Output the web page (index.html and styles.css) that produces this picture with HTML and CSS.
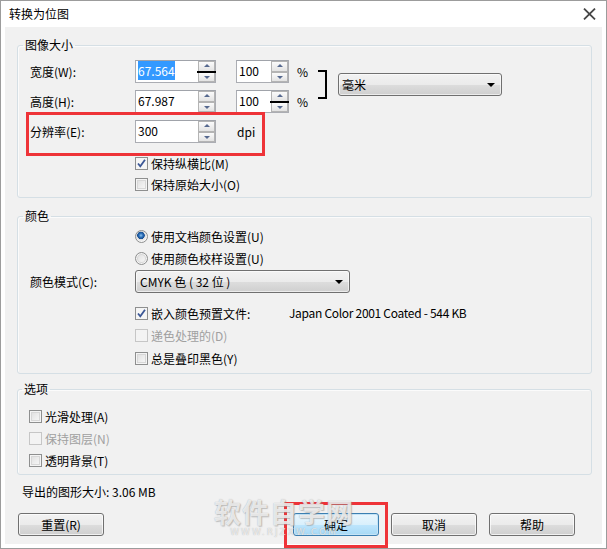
FILE: index.html
```html
<!DOCTYPE html>
<html lang="zh-CN">
<head>
<meta charset="utf-8">
<title>转换为位图</title>
<link rel="stylesheet" href="styles.css">
</head>
<body>
<div class="window">
  <div class="titlebar">
    <span class="title">转换为位图</span>
    <svg class="close" width="13" height="12" viewBox="0 0 13 12"><path d="M1 0.6 L12 11.4 M12 0.6 L1 11.4" stroke="#474747" stroke-width="1.8" fill="none"/></svg>
  </div>
  <div class="content">
    <fieldset class="group g-size">
      <legend>图像大小</legend>
      <div class="size-grid">
        <span class="lbl">宽度(W):</span>
        <div class="spin w81"><span class="val"><span class="sel">67.564</span></span><span class="arrows mark"><i class="up"></i><i class="dn"></i></span></div>
        <div class="spin w53"><span class="val">100</span><span class="arrows"><i class="up"></i><i class="dn"></i></span></div>
        <span class="pct">%</span>
        <span class="bracket"></span>
        <div class="combo unit"><span>毫米</span><i class="caret"></i></div>

        <span class="lbl">高度(H):</span>
        <div class="spin w81"><span class="val">67.987</span><span class="arrows"><i class="up"></i><i class="dn"></i></span></div>
        <div class="spin w53"><span class="val">100</span><span class="arrows mark"><i class="up"></i><i class="dn"></i></span></div>
        <span class="pct">%</span>

        <span class="lbl">分辨率(E):</span>
        <div class="spin w81"><span class="val">300</span><span class="arrows"><i class="up"></i><i class="dn"></i></span></div>
        <span class="dpi">dpi</span>
      </div>
      <div class="checks indent">
        <label class="check"><span class="cb on"><svg width="11" height="11" viewBox="0 0 11 11"><path d="M2 5.5 L4.3 8.3 L9 1.8" stroke="#3b5796" stroke-width="1.8" fill="none"/></svg></span>保持纵横比(M)</label>
        <label class="check"><span class="cb"></span>保持原始大小(O)</label>
      </div>
    </fieldset>

    <fieldset class="group g-color">
      <legend>颜色</legend>
      <div class="indent">
        <label class="check"><span class="rb on"></span>使用文档颜色设置(U)</label>
        <label class="check"><span class="rb"></span>使用颜色校样设置(U)</label>
      </div>
      <div class="mode-row">
        <span class="lbl">颜色模式(C):</span>
        <div class="combo mode"><span>CMYK 色 ( 32 位 )</span><i class="caret"></i></div>
      </div>
      <div class="indent">
        <div class="profile-row">
          <label class="check embed"><span class="cb on"><svg width="11" height="11" viewBox="0 0 11 11"><path d="M2 5.5 L4.3 8.3 L9 1.8" stroke="#3b5796" stroke-width="1.8" fill="none"/></svg></span>嵌入颜色预置文件:</label>
          <span class="profile">Japan Color 2001 Coated - 544 KB</span>
        </div>
        <label class="check disabled"><span class="cb"></span>递色处理的(D)</label>
        <label class="check"><span class="cb"></span>总是叠印黑色(Y)</label>
      </div>
    </fieldset>

    <fieldset class="group g-opt">
      <legend>选项</legend>
      <label class="check"><span class="cb"></span>光滑处理(A)</label>
      <label class="check disabled"><span class="cb"></span>保持图层(N)</label>
      <label class="check"><span class="cb"></span>透明背景(T)</label>
    </fieldset>

    <div class="export">导出的图形大小: 3.06 MB</div>

    <div class="buttons">
      <button class="btn">重置(R)</button>
      <button class="btn default push">确定</button>
      <button class="btn">取消</button>
      <button class="btn">帮助</button>
    </div>

    <span class="mark-box res-box"></span>
    <span class="mark-box ok-box"></span>
    <div class="watermark"><span class="wm-big">软件自学网</span><span class="wm-small">WWW.RJZXW.COM</span></div>
  </div>
</div>
</body>
</html>
```

FILE: styles.css
```css
* { box-sizing: border-box; margin: 0; padding: 0; }
html, body { width: 607px; height: 549px; overflow: hidden; }
body {
  font-family: "Noto Sans CJK SC", "Microsoft YaHei", sans-serif;
  font-size: 12px;
  color: #000;
  background: #fff;
}

.window {
  position: relative;
  width: 607px;
  height: 549px;
  border: 1px solid #9c9c9c;
  background: #fff;
  padding: 0 4px 4px 4px;
  display: flex;
  flex-direction: column;
}

.titlebar {
  height: 26px;
  flex: none;
  display: flex;
  align-items: center;
  justify-content: space-between;
  padding: 0 6px 0 4px;
}
.title { font-size: 12px; line-height: 16px; }
.close { display: block; margin-top: 0; }

.content {
  flex: 1;
  position: relative;
  background: #f1f1f1;
  padding: 10px 10px 0 12px;
  display: flex;
  flex-direction: column;
}

.group {
  border: 1px solid #d5dfe5;
  border-radius: 3px;
  box-shadow: inset 1px 1px 0 #fbfbfb;
  padding: 0 0 0 12px;
  min-width: 0;
}
.group legend {
  font-size: 12px;
  line-height: 16px;
  padding: 0 2px;
  margin-left: -7px;
}

.g-size { padding-bottom: 2px; }
.size-grid {
  margin-top: 7px;
  display: grid;
  grid-template-columns: 105px 101px 53px 29px 20px 164px;
  grid-template-rows: 23px 23px 23px;
  row-gap: 7px;
}
.lbl { line-height: 23px; }

.spin {
  height: 23px;
  display: flex;
  background: #fff;
  border: 1px solid #abadb3;
  border-top-color: #a0a3aa;
}
.w81 { width: 81px; }
.w53 { width: 53px; }
.val {
  flex: 1;
  padding-left: 2px;
  line-height: 20px;
  font-size: 12px;
  white-space: nowrap;
}
.sel { background: #3399ff; color: #fff; padding: 1px 0; }
.arrows {
  position: relative;
  width: 17px;
  display: flex;
  flex-direction: column;
  padding: 0;
}
.arrows i {
  flex: 1;
  position: relative;
  border: 1px solid #b4b4b4;
  background: linear-gradient(#fbfbfb, #e3e3e3);
}
.arrows i::after {
  content: "";
  position: absolute;
  left: 50%;
  top: 50%;
  margin-left: -3px;
  border-left: 3px solid transparent;
  border-right: 3px solid transparent;
}
.arrows .up::after { margin-top: -2px; border-bottom: 3px solid #56698f; }
.arrows .dn::after { margin-top: -1px; border-top: 3px solid #56698f; }
.arrows.mark::before {
  content: "";
  position: absolute;
  left: -1px;
  right: -1px;
  top: 50%;
  height: 2px;
  margin-top: -1px;
  background: #000;
  z-index: 2;
}

.pct { line-height: 23px; padding-left: 8px; }
.dpi { line-height: 23px; padding-left: 1px; }

.bracket {
  grid-row: span 2;
  width: 9px;
  height: 29px;
  margin-top: 10px;
  border: 2px solid #000;
  border-left: none;
}

.combo {
  display: flex;
  align-items: center;
  justify-content: space-between;
  height: 23px;
  border: 1px solid #707070;
  border-radius: 3px;
  background: linear-gradient(#f2f2f2 0%, #ebebeb 50%, #dddddd 51%, #cfcfcf 100%);
  box-shadow: inset 0 0 0 1px rgba(255,255,255,0.6);
  padding: 0 6px 0 3px;
  line-height: 20px;
}
.unit { grid-row: span 2; align-self: start; margin-top: 13px; width: 164px; }
.caret {
  width: 0; height: 0;
  border-left: 4px solid transparent;
  border-right: 4px solid transparent;
  border-top: 4px solid #000;
}

.indent { padding-left: 105px; }
.checks { margin-top: 10px; }
.check {
  display: flex;
  align-items: center;
  height: 21px;
  gap: 3px;
  white-space: nowrap;
}
.cb, .rb {
  flex: none;
  width: 13px;
  height: 13px;
  border: 1px solid #8e8f8f;
  background: linear-gradient(135deg, #dcdcdc, #fbfbfb);
  box-shadow: inset 0 0 0 1px #f4f4f4, inset 0 0 0 2px #d7d7d7;
  display: flex;
  align-items: center;
  justify-content: center;
}
.cb.on { background: #f6f6f6; box-shadow: inset 0 0 0 1px #f4f4f4; }
.rb { border-radius: 50%; }
.rb.on {
  background: radial-gradient(circle at 45% 40%, #8fc3ee 0, #2c6fb8 2px, #174d8f 3.5px, #dcdcdc 4px, #f7f7f7 6px);
  box-shadow: none;
}
.disabled { color: #a0a0a0; }
.disabled .cb { border-color: #c6c6c6; background: #f3f3f3; box-shadow: none; }

.g-color { margin-top: 10px; padding-bottom: 4px; }
.g-color > .indent:first-of-type { margin-top: 1px; }
.g-color .check { height: 22px; }
.mode-row {
  display: flex;
  align-items: center;
  margin-top: 1px;
  margin-bottom: 9px;
}
.mode-row .lbl { width: 105px; }
.mode { width: 215px; padding-left: 4px; }
.profile-row { display: flex; align-items: center; }
.embed { width: 154px; }
.profile { line-height: 22px; letter-spacing: -0.3px; }
.g-color .indent .check.disabled { height: 23px; }

.g-opt { margin-top: 7px; padding-top: 8px; padding-left: 11px; padding-bottom: 3px; }
.g-opt .check { height: 22px; }

.export { margin-top: 9px; padding-left: 5px; line-height: 16px; }

.buttons {
  display: flex;
  gap: 12px;
  margin: 13px 17px 0 1px;
}
.btn {
  width: 86px;
  height: 23px;
  font-family: inherit;
  font-size: 12px;
  color: #000;
  border: 1px solid #707070;
  border-radius: 3px;
  background: linear-gradient(#f2f2f2 0%, #ebebeb 50%, #dddddd 51%, #cfcfcf 100%);
  box-shadow: inset 0 0 0 1px rgba(255,255,255,0.7);
}
.btn.push { margin-left: auto; }
.btn.default {
  border-color: #3c7fb1;
  background: linear-gradient(#eaf6fd 0%, #d9f0fc 50%, #bee6fd 51%, #a7d9f5 100%);
  box-shadow: inset 0 0 0 1px #c5e4f6;
}

.mark-box {
  position: absolute;
  border: 3px solid #ee3338;
  pointer-events: none;
}
.res-box { left: 21px; top: 85px; width: 239px; height: 44px; }
.ok-box { left: 279px; top: 475px; width: 104px; height: 46px; }

.watermark {
  position: absolute;
  left: 206px;
  top: 470px;
  width: 146px;
  display: flex;
  flex-direction: column;
  align-items: center;
  pointer-events: none;
}
.wm-big {
  font-size: 27px;
  font-weight: 700;
  line-height: 30px;
  letter-spacing: 1px;
  color: rgba(255,255,255,0.75);
  text-shadow: 0 0 1px rgba(120,120,120,0.6), 1px 1px 1px rgba(150,150,150,0.5);
}
.wm-small {
  font-family: "DejaVu Sans", sans-serif;
  font-size: 9px;
  letter-spacing: 2px;
  line-height: 10px;
  color: rgba(255,255,255,0.7);
  text-shadow: 0 0 1px rgba(120,120,120,0.6);
}
```
